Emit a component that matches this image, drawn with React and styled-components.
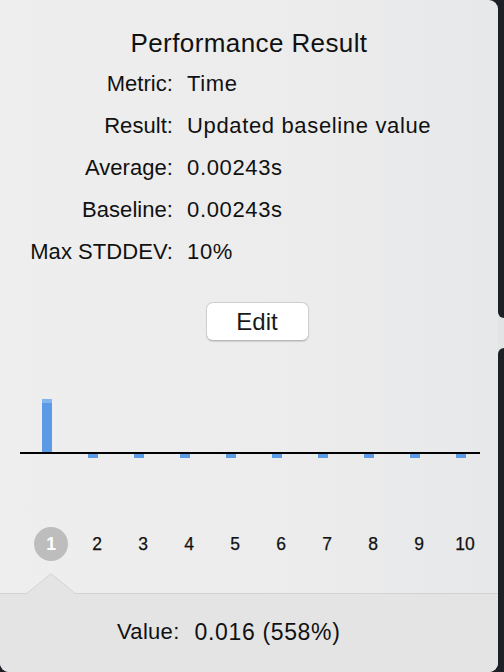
import React from "react";
import styled, { createGlobalStyle } from "styled-components";

const Global = createGlobalStyle`
  html, body { margin: 0; padding: 0; background: #1d2026; }
  body { font-family: "Liberation Sans", Arial, sans-serif; }
`;

const Page = styled.div`
  display: flex;
  width: 504px;
  height: 672px;
  background: #1d2026;
  overflow: hidden;
`;

const Panel = styled.div`
  width: 498px;
  height: 672px;
  display: flex;
  flex-direction: column;
  background: linear-gradient(90deg, #eeeeee 0%, #ececec 60%, #e7e8ea 100%);
  border-radius: 0 9px 9px 9px;
  overflow: hidden;
`;

const Side = styled.div`
  width: 6px;
  display: flex;
  flex-direction: column;
  background: #e3e4e6;
`;

const SideBlock = styled.div`
  background: #1d2026;
  height: ${(p) => (p.$h ? `${p.$h}px` : "auto")};
  flex: ${(p) => (p.$h ? "none" : "1")};
  margin-bottom: ${(p) => (p.$top ? "30px" : "0")};
  border-radius: ${(p) => (p.$top ? "0 0 0 8px" : "8px 0 0 0")};
`;

const Title = styled.div`
  margin-top: 28px;
  height: 30px;
  line-height: 30px;
  text-align: center;
  font-size: 26px;
  letter-spacing: 0.4px;
  color: #111;
`;

const Info = styled.div`
  margin-top: 5px;
  display: grid;
  grid-template-columns: 173px auto;
  column-gap: 14px;
  grid-auto-rows: 42px;
  align-items: center;
  font-size: 22px;
  color: #111;
`;

const Label = styled.div`
  text-align: right;
  white-space: nowrap;
  letter-spacing: 0.05px;
`;

const Value = styled.div`
  white-space: nowrap;
  letter-spacing: 0.65px;
`;

const ButtonRow = styled.div`
  display: flex;
  justify-content: center;
  margin-top: 29px;
`;

const EditButton = styled.button`
  width: 103px;
  height: 39px;
  margin-left: 16px;
  background: #ffffff;
  border: 1px solid #cfcfcf;
  border-bottom-color: #b9b9b9;
  border-radius: 7px;
  box-shadow: 0 1px 1px rgba(0, 0, 0, 0.12);
  font-family: "Liberation Sans", Arial, sans-serif;
  font-size: 24px;
  color: #1a1a1a;
  padding: 0;
`;

const Chart = styled.svg`
  display: block;
  margin: 39px 0 0 20px;
`;

const Steps = styled.div`
  display: flex;
  padding-left: 28px;
  margin-top: 67px;
  height: 34px;
  align-items: center;
`;

const Step = styled.div`
  width: 46px;
  display: flex;
  justify-content: center;
  align-items: center;
  font-size: 17.5px;
  color: #111;
  -webkit-text-stroke: 0.25px #111;
`;

const Dot = styled.div`
  width: 34px;
  height: 34px;
  border-radius: 50%;
  background: #bdbdbd;
  color: #fff;
  display: flex;
  align-items: center;
  justify-content: center;
  font-size: 17.5px;
  font-weight: 700;
  -webkit-text-stroke: 0;
`;

const Footer = styled.div`
  position: relative;
  margin-top: 32px;
  flex: 1;
  background: #e4e4e4;
  border-top: 1px solid #d2d2d2;
  display: flex;
  align-items: center;
  padding-left: 117px;
  padding-bottom: 2px;
  font-size: 22px;
  color: #111;
`;

const Pointer = styled.svg`
  position: absolute;
  left: 26px;
  top: -21px;
`;

const FooterLabel = styled.span`
  margin-right: 15px;
  letter-spacing: 0.3px;
`;

const FooterValue = styled.span`
  font-size: 23px;
  letter-spacing: 0.65px;
`;

const bars = [52, -4, -4, -4, -4, -4, -4, -4, -4, -4];

export default function App() {
  const rows = [
    ["Metric:", "Time"],
    ["Result:", "Updated baseline value"],
    ["Average:", "0.00243s"],
    ["Baseline:", "0.00243s"],
    ["Max STDDEV:", "10%"],
  ];
  return (
    <>
      <Global />
      <Page>
        <Panel>
          <Title>Performance Result</Title>
          <Info>
            {rows.map(([l, v]) => (
              <React.Fragment key={l}>
                <Label>{l}</Label>
                <Value>{v}</Value>
              </React.Fragment>
            ))}
          </Info>
          <ButtonRow>
            <EditButton>Edit</EditButton>
          </ButtonRow>
          <Chart width="460" height="80" viewBox="0 0 460 80">
            {bars.map((h, i) => {
              const x = 22 + i * 46;
              return h > 0 ? (
                <g key={i}>
                  <rect x={x} y={72 - h} width="10" height={h} fill="#5b9be6" />
                  <rect x={x} y={72 - h - 1} width="10" height="4" fill="#82b5ef" />
                </g>
              ) : (
                <rect key={i} x={x} y={74} width="10" height="4" fill="#5b9be6" />
              );
            })}
            <rect x="0" y="72" width="460" height="2" fill="#000" />
          </Chart>
          <Steps>
            {Array.from({ length: 10 }, (_, i) => (
              <Step key={i}>{i === 0 ? <Dot>1</Dot> : i + 1}</Step>
            ))}
          </Steps>
          <Footer>
            <Pointer width="50" height="22" viewBox="0 0 50 22">
              <path d="M0 21.5 L25 1 L50 21.5 Z" fill="#e4e4e4" />
              <path d="M0 21 L25 0.8 L50 21" fill="none" stroke="#d2d2d2" strokeWidth="1" />
            </Pointer>
            <FooterLabel>Value:</FooterLabel>
            <FooterValue>0.016 (558%)</FooterValue>
          </Footer>
        </Panel>
        <Side>
          <SideBlock $top $h={318} />
          <SideBlock />
        </Side>
      </Page>
    </>
  );
}
